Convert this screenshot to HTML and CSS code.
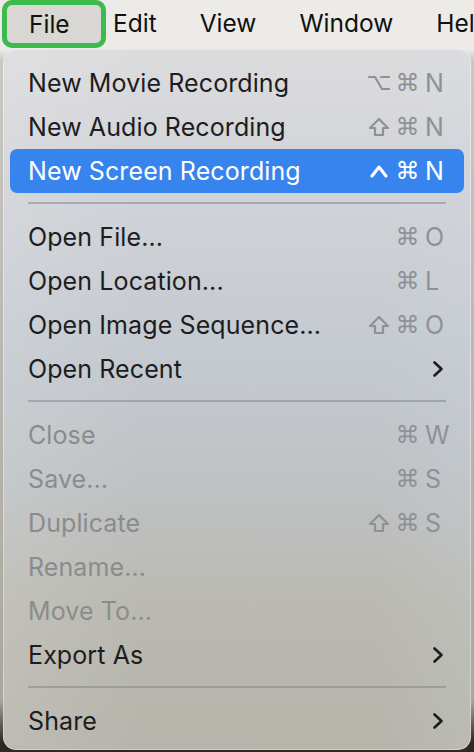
FILE: index.html
```html
<!DOCTYPE html>
<html>
<head>
<meta charset="utf-8">
<link rel="stylesheet" href="styles.css">
</head>
<body>
<div class="menubar">
  <div class="mb-active">File</div>
  <div class="mb-items">
    <div class="mb-item">Edit</div>
    <div class="mb-item">View</div>
    <div class="mb-item">Window</div>
    <div class="mb-item">Help</div>
  </div>
</div>
<div class="menu">
  <div class="row"><span class="label">New Movie Recording</span><span class="sc"><span class="mod"><svg width="22" height="18" viewBox="0 0 22 18"><path d="M1 3 H7 L14 15 H21 M13 3 H21"/></svg></span><span class="cmd">⌘</span><span class="key">N</span></span></div>
  <div class="row"><span class="label">New Audio Recording</span><span class="sc"><span class="mod"><svg width="22" height="20" viewBox="0 0 22 20"><path d="M11 2 L20 11 H15 V18 H7 V11 H2 Z"/></svg></span><span class="cmd">⌘</span><span class="key">N</span></span></div>
  <div class="row selected"><span class="label">New Screen Recording</span><span class="sc"><span class="mod"><svg width="18" height="14" viewBox="0 0 18 14"><path d="M2 12 L9 3 L16 12"/></svg></span><span class="cmd">⌘</span><span class="key">N</span></span></div>
  <div class="sep"></div>
  <div class="row"><span class="label">Open File...</span><span class="sc"><span class="mod"></span><span class="cmd">⌘</span><span class="key">O</span></span></div>
  <div class="row"><span class="label">Open Location...</span><span class="sc"><span class="mod"></span><span class="cmd">⌘</span><span class="key">L</span></span></div>
  <div class="row"><span class="label">Open Image Sequence...</span><span class="sc"><span class="mod"><svg width="22" height="20" viewBox="0 0 22 20"><path d="M11 2 L20 11 H15 V18 H7 V11 H2 Z"/></svg></span><span class="cmd">⌘</span><span class="key">O</span></span></div>
  <div class="row"><span class="label">Open Recent</span><svg class="chev" width="12" height="18" viewBox="0 0 12 18"><path d="M2.5 2.5 L9.5 9 L2.5 15.5"/></svg></div>
  <div class="sep"></div>
  <div class="row disabled"><span class="label">Close</span><span class="sc"><span class="mod"></span><span class="cmd">⌘</span><span class="key">W</span></span></div>
  <div class="row disabled"><span class="label">Save...</span><span class="sc"><span class="mod"></span><span class="cmd">⌘</span><span class="key">S</span></span></div>
  <div class="row disabled"><span class="label">Duplicate</span><span class="sc"><span class="mod"><svg width="22" height="20" viewBox="0 0 22 20"><path d="M11 2 L20 11 H15 V18 H7 V11 H2 Z"/></svg></span><span class="cmd">⌘</span><span class="key">S</span></span></div>
  <div class="row disabled"><span class="label">Rename...</span></div>
  <div class="row disabled"><span class="label">Move To...</span></div>
  <div class="row"><span class="label">Export As</span><svg class="chev" width="12" height="18" viewBox="0 0 12 18"><path d="M2.5 2.5 L9.5 9 L2.5 15.5"/></svg></div>
  <div class="sep"></div>
  <div class="row"><span class="label">Share</span><svg class="chev" width="12" height="18" viewBox="0 0 12 18"><path d="M2.5 2.5 L9.5 9 L2.5 15.5"/></svg></div>
</div>
</body>
</html>
```

FILE: styles.css
```css
html, body {
  margin: 0;
  padding: 0;
}
body {
  width: 474px;
  height: 752px;
  overflow: hidden;
  background: linear-gradient(to bottom, #ecebe7 0, #ecebe7 50px, #c9c8c2 60px, #a9a69c 700px, #2e2924 742px);
  font-family: "Inter", "Noto Sans", sans-serif;
  color: #1d1d1f;
}
.menubar {
  height: 49px;
  display: flex;
  align-items: flex-start;
  background: #ecebe7;
  white-space: nowrap;
  overflow: hidden;
}
.mb-active {
  flex-shrink: 0;
  margin-left: 2px;
  width: 104px;
  height: 48px;
  box-sizing: border-box;
  padding-left: 22px;
  font-size: 24.5px;
  line-height: 38px;
  color: #111;
  border: 5px solid #3cba4b;
  border-radius: 10px;
  background: #d8d7d3;
}
.mb-items {
  display: flex;
  gap: 43px;
  margin-left: 7px;
  flex-shrink: 0;
}
.mb-item {
  flex-shrink: 0;
  font-size: 24.5px;
  line-height: 46px;
  color: #111;
}
.menu {
  margin-left: 3px;
  width: 468px;
  height: 701px;
  box-sizing: border-box;
  padding: 12px 7px 0;
  border-radius: 13px;
  background:
    linear-gradient(to right, rgba(255,255,255,0.10), rgba(255,255,255,0) 30%, rgba(255,255,255,0) 80%, rgba(210,220,230,0.15)),
    linear-gradient(to bottom, #dcdcde 0, #d2d4d8 120px, #c5cad0 300px, #bfc3c6 420px, #bab9b1 560px, #b6b4ab 701px);
  box-shadow: inset 0 0 0 1px rgba(255,255,255,0.35);
}
.row {
  height: 44px;
  display: flex;
  align-items: center;
  justify-content: space-between;
  padding: 0 15px 0 18px;
  font-size: 25px;
  letter-spacing: 0.1px;
  border-radius: 7px;
  white-space: nowrap;
}
.row.selected {
  background: #3884ee;
  color: #ffffff;
}
.row.disabled .label {
  color: #8a8c8c;
}
.sc {
  display: flex;
  align-items: center;
  color: #8e9196;
  font-size: 25px;
}
.selected .sc { color: #ffffff; }
.mod {
  width: 24px;
  display: flex;
  justify-content: center;
  align-items: center;
}
.mod svg path {
  fill: none;
  stroke: currentColor;
  stroke-width: 2.2;
  stroke-linejoin: round;
  stroke-linecap: round;
}
.selected .mod svg path {
  stroke-width: 3;
}
.cmd {
  width: 33px;
  text-align: center;
  font-family: "DejaVu Sans", sans-serif;
  font-size: 24px;
}
.key {
  width: 24px;
  text-align: left;
  padding-left: 1px;
}
.chev {
  margin-right: 5px;
}
.chev path {
  fill: none;
  stroke: #1d1d1f;
  stroke-width: 2.6;
  stroke-linecap: round;
  stroke-linejoin: round;
}
.sep {
  height: 22px;
  display: flex;
  align-items: center;
  padding: 0 18px 2px 18px;
  box-sizing: border-box;
}
.sep::before {
  content: "";
  flex: 1;
  height: 2px;
  background: rgba(120,125,130,0.45);
}
```
